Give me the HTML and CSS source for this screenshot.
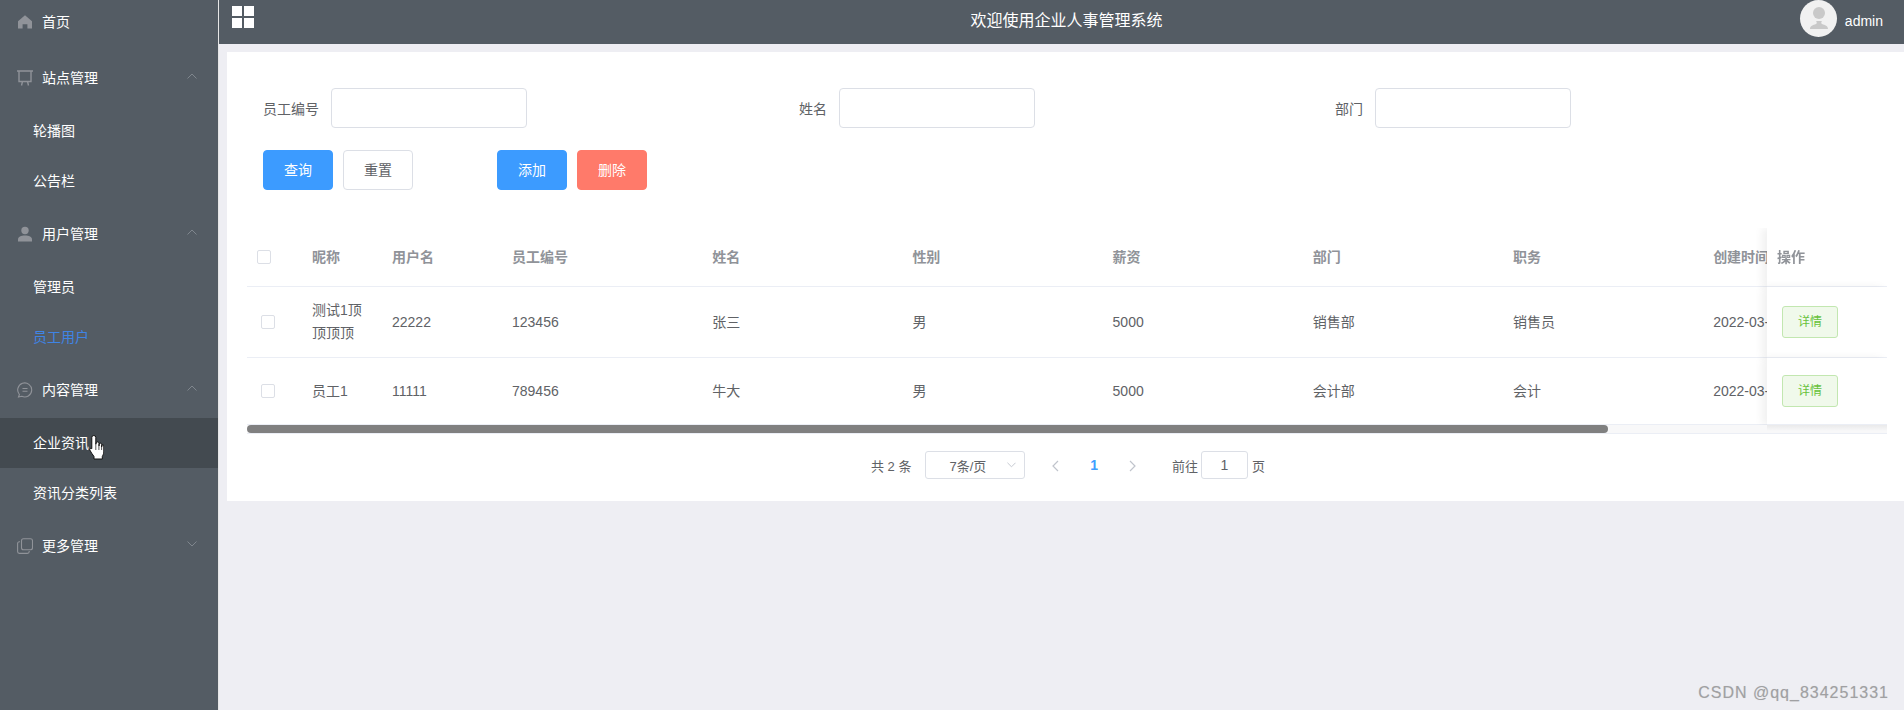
FILE: index.html
```html
<!DOCTYPE html>
<html>
<head>
    <meta charset="utf-8">
    <title>企业人事管理系统</title>
    <link rel="stylesheet" href="styles.css">
</head>
<body>
<div class="layout">
    <!-- 侧边菜单 -->
    <aside class="sidebar">
        <div class="menu-item menu-home">
            <svg class="menu-icon" viewBox="0 0 16 16"><path d="M8 1.200 1 7.200V14.500h4.600V10.200h4.800v4.300H15V7.200z" fill="#909399"/></svg>
            <span>首页</span>
        </div>
        <div class="menu-item">
            <svg class="menu-icon" viewBox="0 0 16 16" fill="none" stroke="#909399" stroke-width="1.400"><path d="M0 1h16M2 1v10.500h12V1M5.500 11.500 4.500 15.500M10.500 11.500l1 4"/></svg>
            <span>站点管理</span>
            <svg class="menu-arrow" viewBox="0 0 10 6" fill="none" stroke="#7f868d" stroke-width="1"><path d="M.5 5.500 5 1l4.500 4.500"/></svg>
        </div>
        <div class="menu-sub">轮播图</div>
        <div class="menu-sub">公告栏</div>
        <div class="menu-item">
            <svg class="menu-icon" viewBox="0 0 16 16"><circle cx="8" cy="4.500" r="3.700" fill="#909399"/><path d="M1 15.500v-2.200c0-2.400 3-3.800 7-3.800s7 1.400 7 3.800v2.200z" fill="#909399"/></svg>
            <span>用户管理</span>
            <svg class="menu-arrow" viewBox="0 0 10 6" fill="none" stroke="#7f868d" stroke-width="1"><path d="M.5 5.500 5 1l4.500 4.500"/></svg>
        </div>
        <div class="menu-sub">管理员</div>
        <div class="menu-sub menu-sub-active">员工用户</div>
        <div class="menu-item">
            <svg class="menu-icon" viewBox="0 0 16 16" fill="none" stroke="#909399" stroke-width="1.100"><path d="M2.400 12.500A7 7 0 1 1 4.800 14.300L1.500 15z"/><path d="M5.500 6.500h5M5.500 9.300h5"/></svg>
            <span>内容管理</span>
            <svg class="menu-arrow" viewBox="0 0 10 6" fill="none" stroke="#7f868d" stroke-width="1"><path d="M.5 5.500 5 1l4.500 4.500"/></svg>
        </div>
        <div class="menu-sub menu-sub-hover">
            企业资讯
            <svg class="hand-cursor" viewBox="0 0 15 25"><path d="M2.800 13V2.500a2 2 0 0 1 4 0V9.500l.4-1.700a1.500 1.500 0 0 1 2.800.2V11l.2-2a1.300 1.300 0 0 1 2.500.2V12l.1-1.200a1 1 0 0 1 2 .2V17c0 2-1 3-1.500 4.500v2.500H5v-2.500C3.500 19 1.800 17.500.8 15c-.5-1.200.8-2.200 2-1.300z" fill="#fff" stroke="#111" stroke-width="1"/><path d="M6.800 10v5M9.900 11v4M12.600 12v3" stroke="#111" stroke-width=".7"/></svg>
        </div>
        <div class="menu-sub">资讯分类列表</div>
        <div class="menu-item">
            <svg class="menu-icon" viewBox="0 0 16 16" fill="none" stroke="#909399" stroke-width="1.100"><rect x="4.500" y=".8" width="11" height="11" rx="2"/><path d="M3 3.800H2.400C1.300 3.800.6 4.500.6 5.600v8c0 1 .8 1.800 1.800 1.800h8c1 0 1.800-.7 1.800-1.800V13"/></svg>
            <span>更多管理</span>
            <svg class="menu-arrow" viewBox="0 0 10 6" fill="none" stroke="#7f868d" stroke-width="1"><path d="M.5.500 5 5 9.500.500"/></svg>
        </div>
    </aside>

    <div class="main">
        <header class="topbar">
            <div class="grid-icon"><i></i><i></i><i></i><i></i></div>
            <div class="topbar-title">欢迎使用企业人事管理系统</div>
            <div class="user">
                <span class="avatar">
                    <svg viewBox="0 0 37 37"><circle cx="19" cy="13" r="6" fill="#c9c9c9"/><path d="M10 29c0-3 3-4 6-5 1-.5 1-2 0-3h6c-1 1-1 2.500 0 3 3 1 6 2 6 5z" fill="#c9c9c9"/></svg>
                </span>
                <span class="user-name">admin</span>
            </div>
        </header>

        <div class="content">
            <div class="card">
                <div class="search-row">
                    <div class="field"><label>员工编号</label><input class="text-input" type="text"></div>
                    <div class="field"><label>姓名</label><input class="text-input" type="text"></div>
                    <div class="field"><label>部门</label><input class="text-input" type="text"></div>
                </div>
                <div class="btn-row">
                    <button class="btn btn-primary">查询</button>
                    <button class="btn">重置</button>
                    <button class="btn btn-primary btn-add">添加</button>
                    <button class="btn btn-danger">删除</button>
                </div>

                <div class="table-wrap">
                    <table class="data-table">
                        <colgroup>
                            <col class="col-check"><col class="col-nick"><col class="col-user">
                            <col class="col-wide"><col class="col-wide"><col class="col-wide">
                            <col class="col-wide"><col class="col-wide"><col class="col-wide">
                            <col><col class="col-op">
                        </colgroup>
                        <thead>
                            <tr>
                                <th class="cell-check"><span class="checkbox"></span></th>
                                <th>昵称</th><th>用户名</th><th>员工编号</th><th>姓名</th><th>性别</th>
                                <th>薪资</th><th>部门</th><th>职务</th><th>创建时间</th>
                                <th class="cell-op">操作</th>
                            </tr>
                        </thead>
                        <tbody>
                            <tr class="row-tall">
                                <td class="cell-check"><span class="checkbox"></span></td>
                                <td>测试1顶顶顶顶</td><td>22222</td><td>123456</td><td>张三</td><td>男</td>
                                <td>5000</td><td>销售部</td><td>销售员</td><td>2022-03-</td>
                                <td class="cell-op"><button class="btn-detail">详情</button></td>
                            </tr>
                            <tr class="row-normal">
                                <td class="cell-check"><span class="checkbox"></span></td>
                                <td>员工1</td><td>11111</td><td>789456</td><td>牛大</td><td>男</td>
                                <td>5000</td><td>会计部</td><td>会计</td><td>2022-03-</td>
                                <td class="cell-op"><button class="btn-detail">详情</button></td>
                            </tr>
                        </tbody>
                    </table>
                </div>
                <div class="scroll-track"><div class="scroll-thumb"></div></div>

                <div class="pager">
                    <span class="pager-total">共 2 条</span>
                    <div class="pager-size">
                        <span>7条/页</span>
                        <svg viewBox="0 0 10 6" fill="none" stroke="#c0c4cc" stroke-width="1"><path d="M.5.500 5 5 9.500.500"/></svg>
                    </div>
                    <span class="pager-btn"><svg viewBox="0 0 7 12" fill="none" stroke="#c0c4cc" stroke-width="1.200"><path d="M6 1 1 6l5 5"/></svg></span>
                    <span class="pager-btn pager-current">1</span>
                    <span class="pager-btn"><svg viewBox="0 0 7 12" fill="none" stroke="#c0c4cc" stroke-width="1.200"><path d="m1 1 5 5-5 5"/></svg></span>
                    <span class="pager-jump">前往</span>
                    <input class="pager-input" type="text" value="1">
                    <span class="pager-unit">页</span>
                </div>
            </div>
        </div>
    </div>
</div>
<div class="watermark">CSDN @qq_834251331</div>
</body>
</html>
```

FILE: styles.css
```css
html, body { margin: 0; height: 100%; overflow: hidden; }
body { background: #eeeef3; color: #606266; font-family: "Liberation Sans", "Noto Sans CJK SC", sans-serif; font-size: 14px; }
.layout { display: flex; height: 100%; }

/* 侧边菜单 */
.sidebar { width: 218px; flex: none; background: #545c64; border-right: 1px solid #e6e6e6; color: #fff; }
.menu-item { display: flex; align-items: center; height: 56px; padding-left: 17px; }
.menu-item span { margin-top: -2px; }
.menu-home { height: 50px; padding-bottom: 6px; box-sizing: border-box; }
.menu-icon { width: 16px; height: 16px; margin-right: 9px; flex: none; }
.menu-arrow { width: 10px; height: 6px; margin-left: auto; margin-right: 21px; margin-top: -4px; }
.menu-sub { position: relative; height: 50px; line-height: 50px; padding-left: 33px; }
.menu-sub-active { color: #3f84e5; }
.menu-sub-hover { background: #434a50; }
.hand-cursor { position: absolute; left: 89px; top: 17px; width: 15px; height: 25px; }

/* 顶栏 */
.main { flex: 1; min-width: 0; display: flex; flex-direction: column; }
.topbar { display: grid; grid-template-columns: 1fr auto 1fr; align-items: center; height: 44px; padding: 0 3px 0 13px; background: #545c64; color: #fff; }
.grid-icon { display: grid; grid-template-columns: 10px 10px; grid-auto-rows: 10px; gap: 2px; margin-top: -10px; }
.grid-icon i { background: #fff; }
.topbar-title { font-size: 16px; margin-top: -7px; }
.user { display: flex; justify-content: flex-end; align-items: center; height: 37px; align-self: start; padding-right: 18px; }
.avatar { width: 37px; height: 37px; border-radius: 50%; background: #f1f1f1; display: block; }
.avatar svg { display: block; width: 37px; height: 37px; }
.user-name { margin-left: 8px; margin-top: 4px; }

/* 主内容 */
.content { padding: 8px 0 0 8px; }
.card { background: #fff; height: 449px; padding: 36px 17px 0 20px; box-sizing: border-box; }
.search-row { display: grid; grid-template-columns: 536px 536px 1fr; padding-left: 16px; }
.field { display: flex; align-items: center; }
.field label { margin-right: 12px; }
.text-input { width: 196px; height: 40px; box-sizing: border-box; border: 1px solid #dcdfe6; border-radius: 4px; background: #fff; }
.btn-row { display: flex; gap: 10px; padding: 22px 0 0 16px; }
.btn { width: 70px; height: 40px; border: 1px solid #dcdfe6; border-radius: 4px; background: #fff; color: #606266; font: inherit; padding: 0 0 2px; }
.btn-primary { background: #3c9bff; border-color: #3c9bff; color: #fff; }
.btn-danger { background: #ff7a6a; border-color: #ff7a6a; color: #fff; }
.btn-add { margin-left: 74px; }

/* 表格 */
.table-wrap { margin-top: 38px; overflow: hidden; }
.data-table { width: 1977px; table-layout: fixed; border-collapse: separate; border-spacing: 0; }
.col-check { width: 55px; }
.col-nick { width: 80px; }
.col-user { width: 120px; }
.col-wide { width: 200.2px; }
.col-op { width: 120px; }
.data-table th, .data-table td { padding: 0 10px; border-bottom: 1px solid #ebeef5; text-align: left; line-height: 23px; background: #fff; white-space: nowrap; }
.data-table td { white-space: normal; }
.data-table th { height: 58px; color: #909399; font-weight: 700; }
.row-tall td { height: 70px; }
.row-normal td { height: 66px; }
.data-table td:nth-child(10) { white-space: nowrap; overflow: hidden; }
.data-table .cell-op { position: sticky; right: 0; box-shadow: -5px 0 8px rgba(0,0,0,.06); }
.data-table td.cell-op { padding-left: 15px; }
.data-table td.cell-check { padding-left: 14px; }
.checkbox { display: block; width: 14px; height: 14px; box-sizing: border-box; border: 1px solid #dcdfe6; border-radius: 2px; background: #fff; }
.btn-detail { display: block; width: 56px; height: 32px; border: 1px solid #c2e7b0; border-radius: 3px; background: #f0f9eb; color: #67c23a; font: inherit; font-size: 12px; padding: 0; }

.scroll-track { position: relative; height: 8px; background: #f8f8f9; border-bottom: 1px solid #ebeef5; }
.scroll-thumb { width: 1361px; height: 8px; background: #808080; border-radius: 4px; }
.scroll-track::after { content: ""; position: absolute; right: 0; top: 0; width: 120px; height: 6px; background: linear-gradient(rgba(0,0,0,.06), rgba(0,0,0,0)); }

/* 分页 */
.pager { display: flex; align-items: center; justify-content: center; height: 28px; margin-top: 17px; padding-left: 2px; font-size: 13px; }
.pager-size { display: flex; align-items: center; width: 100px; height: 28px; box-sizing: border-box; margin-left: 14px; margin-right: 11px; padding: 0 8px 0 23px; border: 1px solid #dcdfe6; border-radius: 3px; }
.pager-size svg { width: 9px; height: 6px; margin-left: auto; }
.pager-btn { width: 38.500px; text-align: center; line-height: 28px; }
.pager-btn svg { width: 7px; height: 12px; vertical-align: middle; }
.pager-current { color: #409eff; font-size: 14px; font-weight: 700; }
.pager-jump { margin-left: 20px; }
.pager-input { width: 47px; height: 28px; box-sizing: border-box; margin: 0 4px 0 3px; border: 1px solid #dcdfe6; border-radius: 3px; text-align: center; color: #606266; font: inherit; font-size: 14px; padding: 0; }

.watermark { position: absolute; right: 15px; top: 684px; color: #a0a0a2; font-size: 16px; letter-spacing: 1px; text-shadow: 0 0 1px rgba(0,0,0,.12); }
```
